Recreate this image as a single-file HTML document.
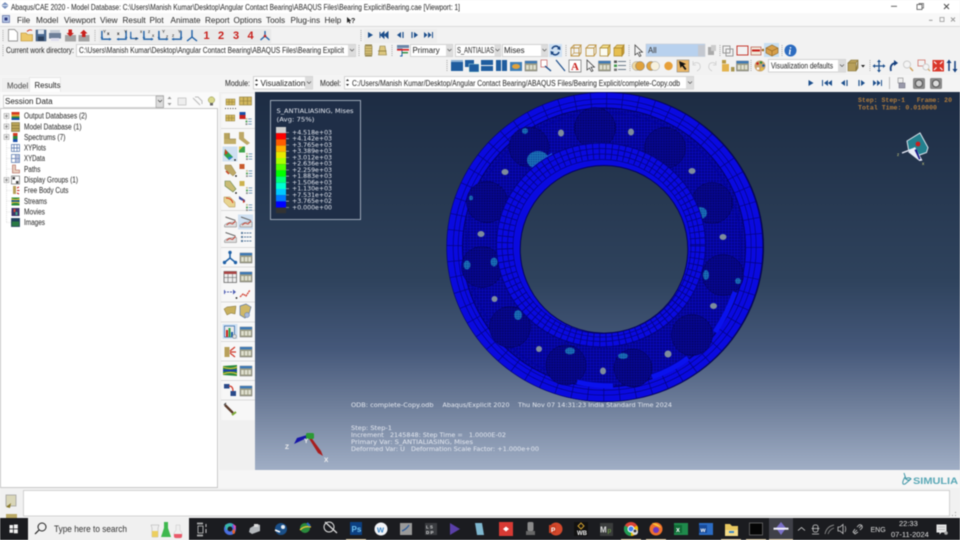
<!DOCTYPE html>
<html><head><meta charset="utf-8"><title>Abaqus/CAE</title>
<style>
html,body{margin:0;padding:0;width:960px;height:540px;overflow:hidden;background:#f4f4f4}
svg{display:block;position:absolute;left:0;top:0;filter:blur(.5px)}
text{font-family:"Liberation Sans",sans-serif;font-size:8px;fill:#222;white-space:pre}
.m{font-size:8.2px;fill:#2a2a2a}
.d{font-family:"DejaVu Sans",sans-serif;font-size:6.4px;fill:#e4e8f0}
.o{font-family:"Liberation Mono",monospace;font-size:6.5px;font-weight:bold;fill:#b17c3c}
.r{font-size:11px;font-weight:bold;fill:#c8201c}
.combo{fill:#fff;stroke:#c4c4c4;stroke-width:.7}
</style></head><body>
<svg width="960" height="540" viewBox="0 0 960 540" xmlns="http://www.w3.org/2000/svg">
<defs>
<linearGradient id="bg" gradientUnits="userSpaceOnUse" x1="0" y1="92" x2="0" y2="470">
<stop offset="0" stop-color="#1d2c43"/><stop offset=".5" stop-color="#2f435d"/><stop offset=".68" stop-color="#45587a"/><stop offset=".82" stop-color="#6c7c98"/><stop offset="1" stop-color="#a0aec5"/></linearGradient>
<pattern id="st" width="3" height="3" patternUnits="userSpaceOnUse"><rect width="3" height="3" fill="#0606a8"/><circle cx="1" cy="1" r=".7" fill="#03036a"/><circle cx="2.5" cy="2.4" r=".4" fill="#1010cc"/></pattern>
<pattern id="bl" width="2.6" height="2.6" patternUnits="userSpaceOnUse"><rect width="2.6" height="2.6" fill="#06068a"/><circle cx="1" cy="1" r=".6" fill="#03034e"/><circle cx="2.2" cy="2.1" r=".35" fill="#0e0eb8"/></pattern>
<pattern id="cy" width="2.4" height="2.4" patternUnits="userSpaceOnUse"><rect width="2.4" height="2.4" fill="#1a70b8"/><circle cx="1" cy="1" r=".7" fill="#0a3a90"/></pattern>
<symbol id="win" viewBox="0 0 12 12" overflow="visible"><rect x="0" y="1" width="12" height="10" fill="#9c9c84" stroke="#777" stroke-width=".5"/><rect x="0" y="1" width="12" height="2.4" fill="#3e78b4"/><rect x="1.2" y="5" width="2.6" height="4.5" fill="#e0e0d0"/><rect x="4.8" y="5" width="2.6" height="4.5" fill="#e0e0d0"/><rect x="8.3" y="5" width="2.6" height="4.5" fill="#e0e0d0"/></symbol>
<symbol id="lst" viewBox="0 0 12 12" overflow="visible"><rect x="1" y="0" width="3" height="3" fill="#c8c090"/><rect x="1" y="4.5" width="3" height="3" fill="#3f9a4a"/><rect x="1" y="9" width="3" height="3" fill="#888"/><path d="M5.5 1.5h6M5.5 6h6M5.5 10.5h6" stroke="#4d7fa8" stroke-width="1.2"/></symbol>
<symbol id="tan" viewBox="0 0 12 12" overflow="visible"><rect x="0" y="1" width="5.5" height="11" fill="#b6a25c"/><rect x="0" y="7" width="12" height="5" fill="#c2ae68"/><path d="M5.5 7V1M5.5 7H12" stroke="#7d6d38" stroke-width=".5"/></symbol>
<symbol id="grid" viewBox="0 0 12 12" overflow="visible"><rect x="0" y="0" width="12" height="8" fill="#d1b75e" stroke="#8c7a38" stroke-width=".6"/><path d="M4 0v8M8 0v8M0 4h12" stroke="#8c7a38" stroke-width=".6"/></symbol>
<symbol id="pl" viewBox="0 0 12 12" overflow="visible"><path d="M1 1l10 3.5" stroke="#666" stroke-width="1"/><path d="M0 9c3-3 8-3 12-3v5H0z" fill="#ddd" stroke="#777" stroke-width=".5"/><path d="M2 9l3-2 3 1 3-3" stroke="#c23a2c" fill="none" stroke-width=".9"/></symbol>
<symbol id="tri" viewBox="0 0 12 12" overflow="visible"><path d="M1 1v9h10" fill="none" stroke="#1d5fa6" stroke-width="1.5"/><path d="M1 10l-1.6-2.2h3.2zM11 10l-2.2-1.6v3.2z" fill="#1d5fa6"/></symbol>
</defs>

<!-- chrome base -->
<rect width="960" height="540" fill="#f4f4f4"/>
<rect width="960" height="13" fill="#fff"/>
<rect y="13" width="960" height="14" fill="#f8f8f8"/>
<rect y="26" width="960" height=".8" fill="#d4d4d4"/>
<rect y="27" width="960" height="48" fill="#f2f2f2"/>
<rect y="75" width="960" height="17" fill="#f4f4f4"/>

<!-- title bar -->
<path d="M5 2.5l3.5 3-3.5 3-3.5-3z" fill="#7f97c4" stroke="#44609a" stroke-width=".5"/><path d="M1.5 5.5h7" stroke="#fff" stroke-width=".7"/>
<text x="11" y="10" textLength="449" lengthAdjust="spacingAndGlyphs" style="font-size:8.4px">Abaqus/CAE 2020 - Model Database: C:\Users\Manish Kumar\Desktop\Angular Contact Bearing\ABAQUS Files\Bearing Explicit\Bearing.cae [Viewport: 1]</text>
<path d="M891 6.3h6" stroke="#555" stroke-width=".9"/>
<rect x="917" y="4.5" width="5" height="5" fill="none" stroke="#555" stroke-width=".8"/><path d="M919 4.5v-1h4.5v4.5h-1.5" fill="none" stroke="#555" stroke-width=".7"/>
<path d="M944 4l5 5M949 4l-5 5" stroke="#444" stroke-width=".9"/>
<path d="M929 20.3h3.5" stroke="#999" stroke-width="1"/>
<rect x="940" y="17.5" width="4" height="4" fill="none" stroke="#999" stroke-width=".8"/>
<path d="M951 17.5l4 4M955 17.5l-4 4" stroke="#999" stroke-width="1"/>

<!-- menu -->
<rect x="2.500" y="15.500" width="7" height="7" fill="#b7c8e8" stroke="#5a6aa0" stroke-width=".7"/><rect x="4.500" y="17.500" width="3" height="3" fill="#2f3a80"/>
<text class="m" x="17" y="23">File</text>
<text class="m" x="36" y="23">Model</text>
<text class="m" x="64" y="23">Viewport</text>
<text class="m" x="100" y="23">View</text>
<text class="m" x="122.500" y="23">Result</text>
<text class="m" x="149.500" y="23">Plot</text>
<text class="m" x="170.500" y="23">Animate</text>
<text class="m" x="205" y="23">Report</text>
<text class="m" x="233.500" y="23">Options</text>
<text class="m" x="266" y="23">Tools</text>
<text class="m" x="290.500" y="23">Plug-ins</text>
<text class="m" x="324.500" y="23">Help</text>
<path d="M347 17v6l1.500-1.500 1 2 1-.5-1-2h2z" fill="#222"/><text x="351" y="23" style="font-size:7px;font-weight:bold">?</text>

<!-- toolbar row 1 -->
<rect x="2" y="29" width="270" height="14" fill="#f0f0f0"/>
<path d="M3 30v11" stroke="#aaa" stroke-width="1" stroke-dasharray="1 1"/>
<path d="M8.500 29.500h6l3 3v8.500h-9z" fill="#fff" stroke="#777" stroke-width=".7"/>
<path d="M21 33h5l1.500 1.500h5v6.500h-11.500z" fill="#ecc769" stroke="#b58a2c" stroke-width=".6"/><path d="M27 31.500c2-2 4-2 5-1" stroke="#d43a22" fill="none" stroke-width="1"/>
<rect x="36" y="30" width="10" height="11" fill="#4b6a92" stroke="#324c6e" stroke-width=".5"/><rect x="38" y="30" width="6" height="4" fill="#dfe6ef"/><rect x="38" y="36.500" width="6" height="4.500" fill="#2a3e5c"/>
<rect x="50" y="30" width="10" height="3.500" fill="#c6cdd6"/><rect x="49" y="33" width="12" height="5.500" fill="#6d7f99"/><rect x="51" y="38" width="8" height="3" fill="#dde"/>
<rect x="65" y="35" width="11" height="6.500" fill="#a3a3a3"/><path d="M68.500 29.500h3.500v3.500h2l-3.800 3.500-3.700-3.500h2z" fill="#c9201c"/>
<rect x="78.500" y="35" width="11" height="6.500" fill="#a3a3a3"/><path d="M82 37h3.500v-3.500h2l-3.800-3.800-3.700 3.800h2z" fill="#c9201c"/>
<path d="M95 30v11" stroke="#aaa" stroke-dasharray="1 1"/>
<rect x="99" y="29" width="172" height="14" fill="#e9e9e9"/>
<use href="#tri" x="101" y="30" width="11" height="11"/><use href="#tri" transform="translate(127,30) scale(-1,1)" width="11" height="11"/>
<use href="#tri" x="130" y="30" width="9" height="11"/><use href="#tri" x="143" y="30" width="11" height="11"/>
<use href="#tri" x="158" y="30" width="11" height="11"/><use href="#tri" transform="translate(182,30) scale(-1,1)" width="11" height="11"/>
<text x="107" y="35" style="font-size:4.500px;font-weight:bold;fill:#111">x</text><text x="103" y="33" style="font-size:4.500px;fill:#111">Y</text>
<text x="117" y="35" style="font-size:4.500px;font-weight:bold;fill:#111">x</text><text x="124" y="33" style="font-size:4.500px;fill:#111">Y</text>
<text x="135" y="40" style="font-size:4.500px;fill:#111">z</text><text x="140" y="33" style="font-size:4.500px;fill:#111">x</text>
<text x="148" y="33" style="font-size:4.500px;fill:#111">z</text><text x="152" y="37" style="font-size:4.500px;fill:#111">x</text>
<text x="162" y="33" style="font-size:4.500px;fill:#111">Y</text><text x="166" y="38" style="font-size:4.500px;fill:#111">z</text>
<text x="172" y="37" style="font-size:4.500px;fill:#111">z</text><text x="178" y="33" style="font-size:4.500px;fill:#111">Y</text>
<path d="M192 30v7M192 37l-5 4M192 37l5 4" stroke="#1d5fa6" stroke-width="1.400" fill="none"/>
<text class="r" x="203.500" y="39">1</text><text class="r" x="218" y="39">2</text><text class="r" x="233" y="39">3</text><text class="r" x="247.500" y="39">4</text>
<path d="M265 31v5M265 36l-4.500 4M265 36l4.500 4" stroke="#1d5fa6" stroke-width="1.300" fill="none"/><circle cx="265" cy="36" r="1.300" fill="#c8201c"/>
<path d="M361 30v11" stroke="#aaa" stroke-dasharray="1 1"/>
<rect x="364" y="29" width="73" height="14" fill="#ededed"/>
<path d="M368 32v6l5-3z" fill="#1d4f8c"/>
<path d="M380 32v6M388 32v6l-3.500-3zM384 32v6l-3.500-3z" stroke="#1d4f8c" stroke-width="1" fill="#1d4f8c"/>
<path d="M401 32v6l-4-3z" fill="#1d4f8c"/><path d="M403 32v6" stroke="#1d4f8c" stroke-width="1.200"/>
<path d="M412 32v6" stroke="#1d4f8c" stroke-width="1.200"/><path d="M414 32v6l4-3z" fill="#1d4f8c"/>
<path d="M424 32v6l3.500-3zM428 32v6l3.500-3z" fill="#1d4f8c"/><path d="M432.500 32v6" stroke="#1d4f8c" stroke-width="1"/>

<!-- toolbar row 2 -->
<path d="M3 45v11" stroke="#aaa" stroke-dasharray="1 1"/>
<text x="6" y="53" textLength="68" lengthAdjust="spacingAndGlyphs" style="font-size:7.800px">Current work directory:</text>
<rect x="76.500" y="44.500" width="279" height="12" class="combo"/>
<text x="79" y="53" textLength="265" lengthAdjust="spacingAndGlyphs" style="font-size:7.900px">C:\Users\Manish Kumar\Desktop\Angular Contact Bearing\ABAQUS Files\Bearing Explicit</text>
<rect x="348" y="45" width="7.500" height="11" fill="#dcdcdc"/><path d="M350 49l2 2 2-2" stroke="#555" fill="none" stroke-width=".7"/>
<path d="M359 45v11" stroke="#aaa" stroke-dasharray="1 1"/>
<path d="M365 45h7M365 56h7" stroke="#8a7a3c"/><rect x="365" y="46" width="7" height="9" fill="#d7c178" stroke="#8a7a3c" stroke-width=".6"/><path d="M365 48.500h7M365 51h7M365 53.500h7" stroke="#8a7a3c" stroke-width=".6"/>
<path d="M380 46h5l1.500 9h-8z" fill="#dcc67e" stroke="#8a7a3c" stroke-width=".6"/><path d="M378 51h8.500" stroke="#8a7a3c" stroke-width=".8"/>
<path d="M392 45v11" stroke="#aaa" stroke-dasharray="1 1"/>
<path d="M397 49h5v7h-2" stroke="#1d5fa6" fill="none"/><rect x="397" y="45" width="12" height="3" fill="#6a86a8"/><rect x="397" y="49" width="12" height="1.600" fill="#d22"/><rect x="402" y="52" width="6" height="1.400" fill="#2a8a3c"/>
<rect x="410.500" y="44.500" width="42" height="12" class="combo"/><text x="412.500" y="53" style="font-size:7.900px">Primary</text>
<rect x="446" y="45" width="6.500" height="11" fill="#dcdcdc"/><path d="M447.500 49l2 2 2-2" stroke="#555" fill="none" stroke-width=".7"/>
<rect x="455.500" y="44.500" width="45" height="12" class="combo"/><text x="457" y="53" textLength="37" lengthAdjust="spacingAndGlyphs" style="font-size:7.800px">S_ANTIALIAS</text>
<rect x="494.500" y="45" width="6" height="11" fill="#dcdcdc"/><path d="M495.500 49l2 2 2-2" stroke="#555" fill="none" stroke-width=".7"/>
<rect x="502.500" y="44.500" width="45" height="12" class="combo"/><text x="504" y="53" style="font-size:7.900px">Mises</text>
<rect x="541" y="45" width="6.500" height="11" fill="#dcdcdc"/><path d="M542.500 49l2 2 2-2" stroke="#555" fill="none" stroke-width=".7"/>
<rect x="549" y="44" width="13" height="13" fill="#cfe1f3"/>
<path d="M552 49c1-3 5-4 7-1M559 52c-1 3-5 4-7 1" fill="none" stroke="#16407e" stroke-width="1.500"/><path d="M560 46l.5 4-3.500-1zM551 55l-.5-4 3.500 1z" fill="#16407e"/>
<path d="M566 45v11" stroke="#aaa" stroke-dasharray="1 1"/>
<path d="M571 48h8l2-3h-7zM571 48v8h8v-8M579 56l2-3v-8" fill="none" stroke="#bd9547" stroke-width=".9"/><path d="M574 45v8h7M574 53l-3 3" fill="none" stroke="#bd9547" stroke-width=".7"/>
<path d="M586 48h8l2-3h-7zM586 48v8h8v-8M594 56l2-3v-8" fill="#f6f6f0" stroke="#bd9547" stroke-width=".9"/>
<path d="M600 48h8l2-3h-7z" fill="#f3dd8a" stroke="#a9862f" stroke-width=".7"/><path d="M600 48v8h8v-8z" fill="#fbfbf1" stroke="#a9862f" stroke-width=".7"/><path d="M608 48l2-3v8l-2 3z" fill="#f0d26e" stroke="#a9862f" stroke-width=".7"/>
<path d="M614 48h8l2-3h-7z" fill="#e9c968" stroke="#a9862f" stroke-width=".7"/><path d="M614 48v8h8v-8z" fill="#e7bf50" stroke="#a9862f" stroke-width=".7"/><path d="M622 48l2-3v8l-2 3z" fill="#c89b33" stroke="#a9862f" stroke-width=".7"/>
<path d="M629 45v11" stroke="#aaa" stroke-dasharray="1 1"/>
<path d="M635 45v10l2.500-2 2 3.500 1.500-.8-2-3.500h3.500z" fill="#f4f4f4" stroke="#333" stroke-width=".7"/>
<rect x="646" y="44" width="59" height="12.500" fill="#b8d1ee" stroke="#c4c8d0" stroke-width=".5"/>
<text x="648" y="53" style="font-size:7.800px;fill:#333">All</text>
<rect x="698" y="45" width="7" height="11" fill="#c4c8d0"/>
<rect x="708" y="47" width="6" height="8" fill="#aaa"/><rect x="711" y="45" width="5" height="6" fill="#ccc"/>
<path d="M720 45v11" stroke="#aaa" stroke-dasharray="1 1"/>
<rect x="723" y="46" width="7" height="7" fill="none" stroke="#999"/><rect x="726" y="49" width="7" height="7" fill="none" stroke="#999"/>
<rect x="737" y="46" width="11" height="9" fill="none" stroke="#c43a30" stroke-width="1"/>
<rect x="751" y="47" width="10" height="8" fill="#f0e8d8" stroke="#b03a2c" stroke-width=".6"/><path d="M752 50.500h8" stroke="#c8201c" stroke-width="2"/><circle cx="763" cy="50" r="1.300" fill="#a06a22"/>
<rect x="764" y="43" width="15" height="14" fill="#c8dff2"/><path d="M766 48l6-3 6 3v5l-6 3-6-3z" fill="#d6a04c" stroke="#8f6220" stroke-width=".6"/><path d="M766 48l6 3 6-3M772 51v5" stroke="#8f6220" stroke-width=".6" fill="none"/>
<path d="M782 45v11" stroke="#aaa" stroke-dasharray="1 1"/>
<circle cx="790.500" cy="50.500" r="6" fill="#2d6cc0"/><text x="788.500" y="54.500" style="font-size:10px;font-weight:bold;font-style:italic;fill:#fff;font-family:'Liberation Serif',serif">i</text>

<!-- toolbar row 3 -->
<path d="M447 60v12" stroke="#aaa" stroke-dasharray="1 1"/>
<rect x="451" y="60" width="12" height="11" fill="#1f5d9f"/><rect x="451" y="60" width="12" height="2" fill="#8db2d4"/>
<rect x="465" y="60" width="9" height="7" fill="#1f5d9f"/><rect x="469" y="64" width="10" height="8" fill="#1f5d9f" stroke="#cfe" stroke-width=".4"/>
<rect x="481" y="60" width="12" height="5" fill="#1f5d9f"/><rect x="481" y="66" width="12" height="5" fill="#1f5d9f"/>
<rect x="496" y="60" width="5" height="11" fill="#1f5d9f"/><rect x="502" y="60" width="5" height="11" fill="#1f5d9f"/>
<rect x="510" y="62" width="12" height="9" fill="#3f7fb8"/><ellipse cx="516" cy="66.500" rx="4" ry="2.500" fill="#e0a23c"/>
<use href="#win" x="525" y="60" width="12" height="12"/>
<rect x="541" y="60" width="6" height="7" fill="#fff" stroke="#b44" stroke-width=".6"/><path d="M545 66l6 5" stroke="#1d4f8c" stroke-width="1.400"/>
<path d="M556 60l9 11" stroke="#1d4f8c" stroke-width="1.200"/>
<rect x="569" y="60" width="12" height="12" fill="#fff" stroke="#555" stroke-width=".6"/><text x="571" y="70" style="font-size:11px;font-weight:bold;fill:#c8201c;font-family:'Liberation Serif',serif">A</text>
<path d="M587 60v10l2.500-2 2 3.500 1.500-.8-2-3.500h3.500z" fill="#f4f4f4" stroke="#333" stroke-width=".7"/>
<use href="#win" x="598.500" y="60" width="12" height="12"/>
<rect x="614" y="60.500" width="3" height="2.500" fill="#555"/><rect x="614" y="64.500" width="3" height="2.500" fill="#3f9a4a"/><rect x="614" y="68.500" width="3" height="2.500" fill="#777"/><path d="M618 61.500h8M618 65.500h8M618 69.500h8" stroke="#6a7a8a"/>
<path d="M630 60v12" stroke="#aaa" stroke-dasharray="1 1"/>
<circle cx="636.500" cy="66" r="4.500" fill="#f0d9a0" stroke="#999" stroke-width=".5"/><circle cx="640" cy="66" r="4.500" fill="#e0a23c" stroke="#777" stroke-width=".5"/>
<circle cx="651" cy="66" r="4.500" fill="#e0a23c" stroke="#777" stroke-width=".5"/><circle cx="655" cy="66" r="4.500" fill="#f7f1de" stroke="#999" stroke-width=".5"/>
<circle cx="668.500" cy="66" r="4.200" fill="#e7a03a"/>
<rect x="677" y="60" width="12" height="12" fill="#e8b565" stroke="#777" stroke-width=".5"/><path d="M679 61l7 3-2.500 1 3 4-1.500 1-3-4-1.500 2z" fill="#111"/>
<path d="M693 64c2-2 6-2 7 1s-1 5-3 6" fill="none" stroke="#ccc" stroke-width=".8"/><path d="M693 61v4h3" fill="none" stroke="#ccc" stroke-width=".7"/>
<path d="M716 64c-2-2-6-2-7 1s1 5 3 6" fill="none" stroke="#ccc" stroke-width=".8"/><path d="M716 61v4h-3" fill="none" stroke="#ccc" stroke-width=".7"/>
<rect x="722" y="60" width="4" height="3.500" fill="#b89a44"/><rect x="722" y="64" width="7" height="7.500" fill="#e3b34c"/><rect x="731" y="67" width="3.500" height="4.500" fill="#a89550"/>
<use href="#win" x="736.500" y="60" width="12" height="12"/>
<path d="M751 60v12" stroke="#aaa" stroke-dasharray="1 1"/>
<circle cx="760" cy="66" r="5.500" fill="#caa26a"/><circle cx="757.500" cy="63.500" r="1.300" fill="#c8201c"/><circle cx="761" cy="62.500" r="1.300" fill="#2e8b3c"/><circle cx="763.500" cy="65.500" r="1.300" fill="#1d5fa6"/><circle cx="762" cy="69" r="1.300" fill="#e8c23a"/><circle cx="758" cy="68.500" r="1.300" fill="#fff"/>
<rect x="768.500" y="59.500" width="77" height="12.500" class="combo"/><text x="771" y="68.500" textLength="62" lengthAdjust="spacingAndGlyphs" style="font-size:7.800px">Visualization defaults</text>
<rect x="838" y="60" width="7.500" height="12" fill="#dcdcdc"/><path d="M840 64.500l2 2 2-2" stroke="#555" fill="none" stroke-width=".7"/>
<path d="M848 63h8l2-3h-7zM848 63v8h8v-8zM856 71l2-3v-8z" fill="#b8a05a" stroke="#7e6c32" stroke-width=".6"/>
<path d="M861 65h4l-2 2.500z" fill="#222"/>
<path d="M870 60v12" stroke="#aaa" stroke-dasharray="1 1"/>
<path d="M879 60.500v11M873.500 66h11" stroke="#1d4f8c" stroke-width="1.200"/><path d="M879 59.500l-2 2.500h4zM879 72.500l-2-2.500h4zM872.500 66l2.500-2v4zM885.500 66l-2.500-2v4z" fill="#1d4f8c"/>
<path d="M891 71c-1-4 0-7 4-8" fill="none" stroke="#16407e" stroke-width="1.800"/><path d="M898 63l-4-3v6z" fill="#16407e"/>
<circle cx="907" cy="64.500" r="3.500" fill="#f4f4f4" stroke="#ccc"/><path d="M910 67.500l3 3.500" stroke="#cfa460" stroke-width="1.500"/>
<rect x="918" y="60" width="7" height="6" fill="none" stroke="#d0736a" stroke-width=".8"/><circle cx="926" cy="67" r="3" fill="#f4f4f4" stroke="#ccc"/><path d="M928 69l2 2" stroke="#cfa460" stroke-width="1.200"/>
<rect x="932.500" y="60" width="11.500" height="11.500" fill="#d9372a"/><path d="M934 61.500l2.500 2.500M942.500 61.500l-2.500 2.500M934 70l2.500-2.500M942.500 70l-2.500-2.500" stroke="#fff" stroke-width="1.100"/>
<path d="M949 61v10M955 61v10" stroke="#16407e" stroke-width="1.500"/><path d="M949 59.500l-2.500 3.500h5zM955 72.500l-2.500-3.500h5z" fill="#16407e"/>

<!-- module row -->
<text x="225" y="86" textLength="25" lengthAdjust="spacingAndGlyphs" style="font-size:8px">Module:</text>
<rect x="253.500" y="76.500" width="59" height="12.500" class="combo"/><path d="M255 81l1.500-2 1.500 2zM255 84l1.500 2 1.500-2z" fill="#222"/><text x="260.500" y="86" style="font-size:8px">Visualization</text>
<rect x="305" y="77" width="7.500" height="12" fill="#dcdcdc"/><path d="M307 81.500l2 2 2-2" stroke="#555" fill="none" stroke-width=".7"/>
<text x="320" y="86" textLength="21" lengthAdjust="spacingAndGlyphs" style="font-size:8px">Model:</text>
<rect x="344.500" y="76.500" width="349" height="12.500" class="combo"/><path d="M346 81l1.500-2 1.500 2zM346 84l1.500 2 1.500-2z" fill="#222"/>
<text x="352" y="86" textLength="328" lengthAdjust="spacingAndGlyphs" style="font-size:8px">C:/Users/Manish Kumar/Desktop/Angular Contact Bearing/ABAQUS Files/Bearing Explicit/complete-Copy.odb</text>
<rect x="686" y="77" width="7.500" height="12" fill="#dcdcdc"/><path d="M688 81.500l2 2 2-2" stroke="#555" fill="none" stroke-width=".7"/>
<path d="M808.500 80v6l5-3z" fill="#1d4f8c"/>
<path d="M822.500 80v6" stroke="#1d4f8c" stroke-width="1"/><path d="M828 80v6l-4-3zM832 80v6l-4-3z" fill="#1d4f8c"/>
<path d="M845 80v6l-4-3z" fill="#1d4f8c"/><path d="M847 80v6" stroke="#1d4f8c" stroke-width="1.200"/>
<path d="M859 80v6" stroke="#1d4f8c" stroke-width="1.200"/><path d="M861 80v6l4-3z" fill="#1d4f8c"/>
<path d="M873 80v6l3.500-3zM877 80v6l3.500-3z" fill="#1d4f8c"/><path d="M881.500 80v6" stroke="#1d4f8c" stroke-width="1"/>
<path d="M889.500 77v12" stroke="#bbb"/>
<rect x="898" y="78" width="5" height="5" fill="#eee" stroke="#888" stroke-width=".6"/><rect x="899" y="83" width="6" height="5" fill="#99a" stroke="#667" stroke-width=".5"/>
<rect x="913" y="78" width="12" height="11" rx="1.500" fill="#8a8a8a"/><circle cx="919" cy="83.500" r="3.500" fill="#ccc" stroke="#555"/>
<rect x="930" y="78" width="12" height="11" rx="1.500" fill="#8a8a8a"/><circle cx="936" cy="83.500" r="3.500" fill="#ddd" stroke="#555"/>

<!-- left panel -->
<rect x="2" y="78" width="27" height="14" fill="#f0f0f0"/><rect x="29.500" y="77.500" width="31" height="15" fill="#fdfdfd" stroke="#e0e0e0" stroke-width=".7"/>
<text x="7" y="88.500" style="font-size:7.800px;fill:#444">Model</text><text x="34.500" y="88" style="font-size:7.800px">Results</text>
<rect x="0" y="92" width="219" height="397" fill="#fafafa"/>
<rect x="3.500" y="95.500" width="160" height="12" class="combo"/>
<text x="5" y="104" style="font-size:8px">Session Data</text>
<rect x="156" y="96" width="7.500" height="11.500" fill="#dcdcdc" stroke="#888" stroke-width=".5"/><path d="M158 100l2 2 2-2" stroke="#444" fill="none" stroke-width=".7"/>
<path d="M167.500 99l2-2.500 2 2.500zM167.500 103l2 2.500 2-2.500z" fill="#999"/>
<rect x="178" y="98" width="8" height="7" fill="#eee" stroke="#bbb" stroke-width=".7"/><path d="M193 98l7 7M195 97h3l4 4v3" stroke="#bbb" fill="none"/>
<circle cx="211.500" cy="100" r="3.200" fill="#d8d88c" stroke="#8a8a44" stroke-width=".5"/><rect x="210" y="103" width="3" height="2.500" fill="#666"/>
<rect x=".5" y="108.500" width="217" height="379" fill="#fff" stroke="#bcbcbc" stroke-width=".8"/>
<path d="M6.500 113v109.500" stroke="#ccc" stroke-width=".6" stroke-dasharray="1 1"/>
<g stroke="#ccc" stroke-width=".6" stroke-dasharray="1 1"><path d="M6.500 158.500h5M6.500 169h5M6.500 190.500h5M6.500 201h5M6.500 212h5M6.500 222.500h5M6.500 148h5"/></g>
<g fill="#eee" stroke="#999" stroke-width=".5"><rect x="4" y="113.500" width="5" height="5"/><rect x="4" y="124" width="5" height="5"/><rect x="4" y="134.500" width="5" height="5"/><rect x="4" y="177.500" width="5" height="5"/></g>
<g stroke="#555" stroke-width=".6"><path d="M5 116h3M6.500 114.500v3M5 126.500h3M6.500 125v3M5 137h3M6.500 135.500v3M5 180h3M6.500 178.500v3"/></g>
<rect x="11.500" y="112" width="8" height="8" fill="#2a8a3c"/><rect x="11.500" y="112" width="8" height="2.700" fill="#d43a22"/><rect x="11.500" y="114.500" width="8" height="2" fill="#e7a03a"/><rect x="11.500" y="118" width="8" height="2" fill="#1a4fa8"/>
<rect x="11.500" y="122.500" width="8" height="9" fill="#bca65a" stroke="#665a2a" stroke-width=".5"/><path d="M11.500 125.500h8M11.500 128.500h8" stroke="#665a2a" stroke-width=".5"/>
<rect x="13" y="133" width="4.500" height="9" fill="#2a8a3c"/><rect x="13" y="133" width="4.500" height="3" fill="#d43a22"/><rect x="13" y="139" width="4.500" height="3" fill="#1a4fa8"/>
<g fill="none" stroke="#4d6fa8" stroke-width=".7"><rect x="11.500" y="144.500" width="8" height="7"/><path d="M14 144.500v7M17 144.500v7M11.500 148h8"/><rect x="11.500" y="154.500" width="8" height="8"/><path d="M15.500 154.500v8M11.500 158.500h8"/></g>
<rect x="15" y="155" width="4" height="7" fill="#8d9bc5" opacity=".6"/>
<path d="M12.500 165v8h7v-3h-4v-5z" fill="#e9d0c0" stroke="#a8554a" stroke-width=".6"/>
<rect x="11.500" y="176" width="8" height="8" fill="#fff" stroke="#555" stroke-width=".6"/><rect x="12.500" y="177" width="2.500" height="2.500" fill="#444"/><rect x="16" y="181" width="2.500" height="2.500" fill="#444"/>
<rect x="13" y="186" width="3" height="8" fill="#b8a05a"/><path d="M17 188l2-1M17 190.500h2.500M17 193l2 1" stroke="#c8201c" stroke-width="1"/>
<path d="M11.500 197.500h8v8h-8z" fill="#2a8a3c"/><path d="M11.500 199c3 1 5 1 8 0M11.500 203c3-1 5-1 8 0" stroke="#e0c040" fill="none" stroke-width="1.200"/><path d="M11.500 201h8" stroke="#1a4fa8" stroke-width="1.300"/>
<rect x="11.500" y="208" width="8" height="8" fill="#3d3468"/><rect x="13.500" y="209" width="2" height="3" fill="#c43"/><rect x="15.500" y="212" width="2" height="3" fill="#4a8"/>
<rect x="11.500" y="218.500" width="8" height="8" fill="#2a7a44" stroke="#1e3e5a" stroke-width=".8"/><rect x="11.500" y="218.500" width="8" height="3" fill="#1e3e5a"/>
<g style="fill:#333">
<text x="24" y="118.500" textLength="63" lengthAdjust="spacingAndGlyphs">Output Databases (2)</text>
<text x="24" y="129.500" textLength="57.500" lengthAdjust="spacingAndGlyphs">Model Database (1)</text>
<text x="24" y="140" textLength="41.500" lengthAdjust="spacingAndGlyphs">Spectrums (7)</text>
<text x="24" y="150.500" textLength="22" lengthAdjust="spacingAndGlyphs">XYPlots</text>
<text x="24" y="161" textLength="21" lengthAdjust="spacingAndGlyphs">XYData</text>
<text x="24" y="172" textLength="16.500" lengthAdjust="spacingAndGlyphs">Paths</text>
<text x="24" y="182.500" textLength="54" lengthAdjust="spacingAndGlyphs">Display Groups (1)</text>
<text x="24" y="193" textLength="44.500" lengthAdjust="spacingAndGlyphs">Free Body Cuts</text>
<text x="24" y="204" textLength="23" lengthAdjust="spacingAndGlyphs">Streams</text>
<text x="24" y="214.500" textLength="21" lengthAdjust="spacingAndGlyphs">Movies</text>
<text x="24" y="225" textLength="21" lengthAdjust="spacingAndGlyphs">Images</text>
</g>

<!-- toolbox -->
<rect x="219" y="92" width="36" height="396" fill="#f0f0f0"/>
<rect x="221.500" y="94" width="33.500" height="326" fill="#f7f7f7"/>
<g stroke="#d4d4d4" stroke-width=".8"><path d="M221 128.500h34M221 210.500h34M221 247.500h34M221 267h34M221 302h34M221 322h34M221 341.500h34M221 361h34M221 380.500h34M221 400h34"/></g>
<rect x="222.500" y="146.500" width="15" height="15" fill="#cfe0f2"/><rect x="238" y="214.500" width="15" height="15" fill="#cfe0f2"/><rect x="222.500" y="324" width="15" height="15" fill="#cfe0f2"/>
<use href="#grid" x="224" y="99" width="13" height="9"/><path d="M225 108.500h11" stroke="#444" stroke-dasharray="1 1.500"/>
<use href="#grid" x="239" y="97" width="13" height="12"/>
<use href="#grid" x="224" y="115" width="12.500" height="9"/>
<rect x="239.500" y="112" width="6" height="7" fill="#c8201c"/><rect x="239.500" y="112" width="6" height="3" fill="#1a4fa8"/><use href="#lst" x="245" y="117" width="7" height="9"/>
<use href="#tan" x="224" y="132" width="12" height="12"/><path d="M239 132h5v6l6 5-3 2-8-6z" fill="#bda866"/>
<path d="M225 149l8 8-4 3-5-5z" fill="#2aa24a"/><path d="M225 149v6l3-2z" fill="#d43a22"/><path d="M233 157l-4 3-1-3z" fill="#2a7ad0"/><circle cx="235" cy="160" r=".9" fill="#111"/>
<rect x="239" y="146.500" width="6" height="6" fill="#3fa24a"/><path d="M239 146.500h4l-4 4z" fill="#e0c040"/><use href="#lst" x="245.500" y="152" width="7" height="9"/>
<path d="M225 165h6l5 8-3 3-8-7z" fill="#bda866" stroke="#7d6d38" stroke-width=".4"/><path d="M226 171l3 3" stroke="#c8401c" stroke-width="1.500"/><circle cx="236" cy="176" r=".9" fill="#111"/>
<rect x="239.500" y="164" width="5" height="5" fill="#c85a2c"/><use href="#lst" x="245.500" y="169" width="7" height="9"/>
<path d="M225 181h5l6 8-3 3-8-6z" fill="#c9bc74" stroke="#5f7f48" stroke-width=".6"/><circle cx="236" cy="193" r=".9" fill="#111"/>
<rect x="239.500" y="181" width="5" height="5" fill="#cdb24e"/><use href="#lst" x="245.500" y="186" width="7" height="9"/>
<path d="M224 197h6l5 5v5h-6l-5-5z" fill="#e8d490" stroke="#a8884a" stroke-width=".5"/><path d="M226 198c4 0 6 2 7 5" fill="none" stroke="#d43a22" stroke-width="1"/>
<path d="M239 196l6 4v2l-6-3z" fill="#3a4a9a"/><path d="M243 199l2 3-2 1z" fill="#c8301c"/><use href="#lst" x="245.500" y="203" width="7" height="9"/>
<use href="#pl" x="224" y="216" width="13" height="12"/><use href="#pl" x="239.500" y="216" width="13" height="12"/>
<use href="#pl" x="224" y="231.500" width="13" height="12"/>
<g fill="#5a7a9c"><rect x="241" y="232" width="2" height="2"/><rect x="241" y="236" width="2" height="2"/><rect x="241" y="240" width="2" height="2"/></g><path d="M244 233h8M244 237h8M244 241h8" stroke="#5a7a9c" stroke-dasharray="2 .7"/>
<path d="M230 254v4M230 258l-5 4M230 258l5 4" stroke="#1d5fa6" stroke-width="1.500" fill="none"/><circle cx="230" cy="252.500" r="1.700" fill="#1d5fa6"/><circle cx="224.500" cy="262.500" r="1.700" fill="#1d5fa6"/><circle cx="235.500" cy="262.500" r="1.700" fill="#1d5fa6"/>
<use href="#win" x="239.500" y="252" width="13" height="12"/>
<rect x="224" y="271.500" width="12.500" height="11" fill="#eee" stroke="#555" stroke-width=".7"/><rect x="224" y="271.500" width="12.500" height="2.500" fill="#a44"/><path d="M228 274v8.500M232.500 274v8.500M224 277.500h12.500" stroke="#555" stroke-width=".5"/>
<use href="#win" x="239.500" y="271" width="13" height="12"/>
<path d="M224 292h10" stroke="#4a5ab0" stroke-width="1" stroke-dasharray="2 1"/><path d="M236 292l-3-2.500v5z" fill="#4a5ab0"/><path d="M224.500 290v4" stroke="#4a5ab0"/><circle cx="236.500" cy="298" r=".9" fill="#111"/>
<path d="M240 297l3-3 3 2 4-6" fill="none" stroke="#d03a2a" stroke-width="1.200" stroke-dasharray="2 .5"/>
<path d="M224 309l3-2 9-1-1 8-4-1-4 2z" fill="#c8b05e" stroke="#7d6d38" stroke-width=".5"/>
<path d="M240 306l6-2 5 3-2 7-4 4-5-3z" fill="#d0b868" stroke="#5a76a8" stroke-width=".7"/><circle cx="247" cy="315" r="2.500" fill="#a8b8d8" stroke="#5a76a8" stroke-width=".5"/>
<rect x="224.500" y="326" width="10" height="11" fill="#e8e8e8" stroke="#1d5fa6" stroke-width=".7"/><rect x="226" y="330" width="2" height="7" fill="#c8201c"/><rect x="228.500" y="328" width="2" height="9" fill="#2aa24a"/><rect x="231" y="332" width="2" height="5" fill="#1d5fa6"/><circle cx="234.500" cy="336.500" r="2" fill="#ddd" stroke="#777" stroke-width=".5"/>
<use href="#win" x="239.500" y="326" width="13" height="12"/>
<rect x="224.500" y="347" width="5" height="10" fill="#b8a05a"/><path d="M230 351l5-4M230 352h6M230 353l5 4" stroke="#d03a2a" stroke-width="1.200"/>
<use href="#win" x="239.500" y="346" width="13" height="12"/>
<path d="M223 366l14-1v11l-14-1z" fill="#2a8a3c"/><path d="M223 367c5 2 10 2 14 0M223 374c5-2 10-2 14 0" stroke="#e0c040" stroke-width="1.200" fill="none"/><path d="M223 370.500h14" stroke="#1d3fa8" stroke-width="2"/>
<use href="#win" x="239.500" y="365" width="13" height="12"/>
<rect x="224" y="384" width="5.500" height="4.500" fill="#2a4a8a"/><rect x="230.500" y="391" width="5.500" height="5" fill="#2a4a8a"/><path d="M229 386c3 0 4 2 4 5" fill="none" stroke="#d03a2a" stroke-width="1.200"/>
<use href="#win" x="239.500" y="385" width="13" height="12"/>
<path d="M225 405l8 8" stroke="#5a3a2a" stroke-width="2.400"/><path d="M224 405l2-2" stroke="#333"/><path d="M232 415l4-3" stroke="#7aa832" stroke-width="2"/>

<!-- viewport -->
<rect x="255" y="92" width="705" height="378" fill="url(#bg)"/>

<!-- Legend -->
<rect x="270.500" y="100.500" width="90" height="119" fill="#1f2e47" stroke="#a8b3c2" stroke-width=".9"/>
<text class="d" x="276.500" y="113" textLength="77" lengthAdjust="spacingAndGlyphs">S_ANTIALIASING, Mises</text>
<text class="d" x="276.500" y="121.500" textLength="38" lengthAdjust="spacingAndGlyphs">(Avg: 75%)</text>
<rect x="276" y="127" width="10" height="6.200" fill="#cfcfcf"/><rect x="276" y="133.200" width="10" height="6.200" fill="#ff0000"/><rect x="276" y="139.400" width="10" height="6.200" fill="#ff5c00"/><rect x="276" y="145.600" width="10" height="6.200" fill="#ffb000"/><rect x="276" y="151.800" width="10" height="6.200" fill="#e8e800"/><rect x="276" y="158" width="10" height="6.200" fill="#a8ff00"/><rect x="276" y="164.200" width="10" height="6.200" fill="#50ff00"/><rect x="276" y="170.400" width="10" height="6.200" fill="#00ff00"/><rect x="276" y="176.600" width="10" height="6.200" fill="#00ff78"/><rect x="276" y="182.800" width="10" height="6.200" fill="#00ffd0"/><rect x="276" y="189" width="10" height="6.200" fill="#00c8ff"/><rect x="276" y="195.200" width="10" height="6.200" fill="#0078ff"/><rect x="276" y="201.400" width="10" height="6.200" fill="#0000ff"/><rect x="276" y="207.600" width="10" height="5.600" fill="#333"/>
<g stroke="#c8ced8" stroke-width=".6"><path d="M286 132.500h3M286 138.700h3M286 145h3M286 151.200h3M286 157.500h3M286 163.700h3M286 170h3M286 176.200h3M286 182.500h3M286 188.700h3M286 195h3M286 201.200h3M286 207.500h3"/></g>
<text class="d" x="292" y="134.500" textLength="40" lengthAdjust="spacingAndGlyphs">+4.518e+03</text>
<text class="d" x="292" y="140.700" textLength="40" lengthAdjust="spacingAndGlyphs">+4.142e+03</text>
<text class="d" x="292" y="147" textLength="40" lengthAdjust="spacingAndGlyphs">+3.765e+03</text>
<text class="d" x="292" y="153.200" textLength="40" lengthAdjust="spacingAndGlyphs">+3.389e+03</text>
<text class="d" x="292" y="159.500" textLength="40" lengthAdjust="spacingAndGlyphs">+3.012e+03</text>
<text class="d" x="292" y="165.700" textLength="40" lengthAdjust="spacingAndGlyphs">+2.636e+03</text>
<text class="d" x="292" y="172" textLength="40" lengthAdjust="spacingAndGlyphs">+2.259e+03</text>
<text class="d" x="292" y="178.200" textLength="40" lengthAdjust="spacingAndGlyphs">+1.883e+03</text>
<text class="d" x="292" y="184.500" textLength="40" lengthAdjust="spacingAndGlyphs">+1.506e+03</text>
<text class="d" x="292" y="190.700" textLength="40" lengthAdjust="spacingAndGlyphs">+1.130e+03</text>
<text class="d" x="292" y="197" textLength="40" lengthAdjust="spacingAndGlyphs">+7.531e+02</text>
<text class="d" x="292" y="203.200" textLength="40" lengthAdjust="spacingAndGlyphs">+3.765e+02</text>
<text class="d" x="292" y="209.500" textLength="40" lengthAdjust="spacingAndGlyphs">+0.000e+00</text>

<!-- step text -->
<text class="o" x="858" y="102" textLength="94" lengthAdjust="spacingAndGlyphs">Step: Step-1   Frame: 20</text>
<text class="o" x="858" y="109.500" textLength="79" lengthAdjust="spacingAndGlyphs">Total Time: 0.010000</text>

<!-- orientation -->
<path d="M907 141l13-8 8 14.500-1.500 5-10 3.500-8-6.500z" fill="#23808e" stroke="#dfe6ee" stroke-width="1"/>
<circle cx="918" cy="144" r="2.400" fill="#c81e1e"/>
<path d="M915 148l-13 5" stroke="#e8ecf8" stroke-width="1.400"/>
<path d="M908 152l7-5 7.500 13.500-3 .5z" fill="#e8ecf8"/><path d="M914.500 150l2-1 4 10-1.500.5z" fill="#1a1a88"/>
<text x="897" y="156" style="font-size:4.500px;fill:#d8d880">z</text><text x="922" y="165" style="font-size:4.500px;fill:#d8d880">x</text>

<!-- bearing -->
<g transform="translate(604.700,247) scale(1,.978)">
<circle r="158.500" cx=".8" fill="#05054a"/>
<circle r="158" fill="#0a0ae0"/>
<g fill="none" stroke="#04047c" stroke-width=".7"><circle r="158"/><circle r="151.500"/><circle r="146.500"/></g>
<circle r="148.700" fill="none" stroke="#04047c" stroke-width="19" stroke-dasharray=".8 14.800" opacity=".9"/>
</g>
<ellipse cx="604" cy="247.500" rx="141.500" ry="139.500" fill="url(#st)" stroke="#03036a" stroke-width="1"/>
<ellipse cx="604" cy="247.500" rx="137" ry="135" fill="none" stroke="#0202a0" stroke-width="1"/>

<!-- balls -->
<g fill="url(#bl)" stroke="#03034e" stroke-width=".5">
<circle cx="595" cy="128" r="20.500"/><circle cx="529" cy="147" r="20"/><circle cx="665" cy="148" r="20.500"/><circle cx="712" cy="203" r="20.500"/><circle cx="487" cy="202" r="20.500"/><circle cx="482" cy="267" r="20.500"/><circle cx="723" cy="275" r="20.500"/><circle cx="692" cy="335" r="20.500"/><circle cx="510" cy="327" r="20.500"/><circle cx="566" cy="365" r="20"/><circle cx="633" cy="368" r="19"/>
</g>
<g fill="url(#cy)">
<ellipse cx="538" cy="160" rx="11" ry="9"/><ellipse cx="700" cy="213" rx="7" ry="6"/><ellipse cx="596" cy="145" rx="4" ry="2.500"/><ellipse cx="656" cy="165" rx="4" ry="3"/><ellipse cx="525" cy="131" rx="3" ry="3"/><ellipse cx="467" cy="265" rx="3.500" ry="4.500"/><ellipse cx="494" cy="262" rx="3.500" ry="4.500"/><ellipse cx="706" cy="275" rx="3" ry="5"/><ellipse cx="738" cy="281" rx="3" ry="3"/><ellipse cx="518" cy="315" rx="4" ry="5"/><ellipse cx="570" cy="351" rx="5" ry="3.500"/><ellipse cx="623" cy="356" rx="5" ry="3"/><ellipse cx="471" cy="198" rx="2" ry="2.500"/>
</g>
<g fill="#7e8c9c">
<ellipse cx="561" cy="133" rx="3" ry="3.500"/><ellipse cx="631" cy="132" rx="3" ry="3.500"/><ellipse cx="692" cy="171" rx="3.500" ry="3"/><ellipse cx="723" cy="237" rx="3.500" ry="3"/><ellipse cx="713.500" cy="306" rx="3.500" ry="3"/><ellipse cx="668" cy="354" rx="3.500" ry="3.500"/><ellipse cx="603" cy="371" rx="3" ry="3.500"/><ellipse cx="539" cy="349" rx="3" ry="3"/><ellipse cx="494.500" cy="299" rx="3" ry="3"/><ellipse cx="481" cy="234" rx="3.500" ry="3"/><ellipse cx="505" cy="172" rx="3.500" ry="3"/>
</g>
<g fill="none" stroke="#0a12ee" stroke-width="5">
<path d="M735 292c-5 14-12 28-20 40"/><path d="M688 358c-10 8-24 15-36 19"/><path d="M577 382c12 3 25 4 36 4"/>
</g>
<path d="M533 169l20-14" fill="none" stroke="#1a50f0" stroke-width="5"/>

<!-- inner ring -->
<ellipse cx="601" cy="245" rx="104.500" ry="102" fill="#0a0ae0" stroke="#04047c" stroke-width=".9"/>
<g fill="none" stroke="#04047c" stroke-width=".7"><ellipse cx="601" cy="245" rx="99" ry="96.500"/><ellipse cx="601.500" cy="245.500" rx="94" ry="91.500"/><ellipse cx="602" cy="246.500" rx="89" ry="87"/></g>
<ellipse cx="601.500" cy="245.500" rx="96.500" ry="94.500" fill="none" stroke="#04047c" stroke-width="16" stroke-dasharray=".8 5.500"/>
<circle cx="604" cy="249.300" r="84.300" fill="#03035e"/>
<circle cx="604" cy="249.300" r="83.300" fill="url(#bg)"/>

<!-- footer text in viewport -->
<text class="d" x="351" y="407" textLength="82.500" lengthAdjust="spacingAndGlyphs">ODB: complete-Copy.odb</text>
<text class="d" x="442.500" y="407" textLength="67" lengthAdjust="spacingAndGlyphs">Abaqus/Explicit 2020</text>
<text class="d" x="518" y="407" textLength="154" lengthAdjust="spacingAndGlyphs">Thu Nov 07 14:31:23 India Standard Time 2024</text>
<text class="d" x="351" y="430" textLength="41" lengthAdjust="spacingAndGlyphs">Step: Step-1</text>
<text class="d" x="351" y="437" textLength="155" lengthAdjust="spacingAndGlyphs">Increment   2145848: Step Time =   1.0000E-02</text>
<text class="d" x="351" y="444" textLength="122" lengthAdjust="spacingAndGlyphs">Primary Var: S_ANTIALIASING, Mises</text>
<text class="d" x="351" y="451" textLength="188" lengthAdjust="spacingAndGlyphs">Deformed Var: U   Deformation Scale Factor: +1.000e+00</text>

<!-- triad -->
<path d="M311 436l-17 8 3-6 10-3z" fill="#1515a8"/>
<path d="M310 436l11 15 2 5-5-3-10-16z" fill="#a81e1e"/>
<rect x="306" y="433" width="8" height="6" rx="1.500" fill="#2c9a34"/>
<text x="285" y="449" style="font-size:6.500px;font-weight:bold;fill:#eee">Z</text><text x="304" y="443" style="font-size:6.500px;font-weight:bold;fill:#eee">Y</text><text x="324" y="462" style="font-size:6.500px;font-weight:bold;fill:#eee">X</text>

<!-- bottom strip -->
<rect x="219" y="470" width="741" height="19" fill="#f6f6f6"/>
<path d="M905 477c-3 5-3 8 0 7l6-5c-1-2-4-1-6 0M904 473l2 6c2 2 3 1 5 0" fill="none" stroke="#3f96a6" stroke-width="1"/>
<text x="913" y="484" textLength="45" lengthAdjust="spacingAndGlyphs" style="font-size:9px;font-weight:bold;fill:#5aa8b6">SIMULIA</text>
<rect y="488" width="960" height="30" fill="#f1f1f1"/>
<rect x="23.500" y="490.500" width="926" height="25.500" fill="#fff" stroke="#c8c8c8" stroke-width=".8"/>
<rect x="6" y="495" width="10" height="11" fill="#d9d6b8" stroke="#999" stroke-width=".7"/><path d="M6 507l5-4-1 5z" fill="#8a7a2c"/>
<rect x="6" y="514" width="11" height="5" fill="#b9a864"/>
<path d="M952 515h1v1h-1zM955 512h1v1h-1zM955 515h1v1h-1z" fill="#999"/>

<!-- taskbar -->
<rect y="518" width="960" height="22" fill="#1b1c20"/>
<g fill="#f2f2f2"><rect x="9.500" y="525" width="3.500" height="3.500"/><rect x="13.800" y="524.500" width="4" height="4"/><rect x="9.500" y="529.300" width="3.500" height="3.500"/><rect x="13.800" y="529.300" width="4" height="4"/></g>
<rect x="28" y="518" width="161" height="22" fill="#f0f0f0"/>
<circle cx="42" cy="527" r="4" fill="none" stroke="#222" stroke-width="1"/><path d="M39 530l-4 4" stroke="#222" stroke-width="1.200"/>
<text x="54" y="532" textLength="73" lengthAdjust="spacingAndGlyphs" style="font-size:9px;fill:#333">Type here to search</text>
<path d="M151 525h8l-1 3v9h-6v-9z" fill="#eee" stroke="#aaa" stroke-width=".5"/><rect x="152" y="531" width="6" height="6" fill="#eccf60"/>
<path d="M164 522h4v6l3 9h-10l3-9z" fill="#3fb84f"/>
<path d="M176 525h4v5l2 3v3a2 2 0 0 1-2 2h-4a2 2 0 0 1-2-2v-3l2-3z" fill="#eee" stroke="#bbb" stroke-width=".4"/><path d="M174 534h8v2a2 2 0 0 1-2 2h-4a2 2 0 0 1-2-2z" fill="#ea5a6a"/>
<path d="M197.500 524h5v-1h-5zM198 526h5v7h-5zM197.500 535h5v1h-5z" fill="none" stroke="#c8c8c8" stroke-width=".8"/><path d="M206 524v3M206 529v4" stroke="#c8c8c8"/>
<circle cx="230" cy="529" r="6" fill="#4a6ee0"/><path d="M225 525c3-2 6-2 8-1l-3 5-4 1z" fill="#38b8a8"/><path d="M232 531c1 3 1 4 3 2v-5z" fill="#e8622c"/><circle cx="230" cy="529" r="2.500" fill="#1a1c20"/><path d="M233 524l3 2-1 5z" fill="#e84ab0"/>
<path d="M250 528l7-4 3 1v6l-8 3-3-2z" fill="#b4b8bc"/><rect x="254" y="524" width="4" height="3" fill="#ddd"/>
<circle cx="281" cy="529" r="6" fill="#1a4f88"/><circle cx="283" cy="527" r="2" fill="#e8eef4"/><path d="M275 530l5 2" stroke="#fff" stroke-width="1.500"/>
<circle cx="305" cy="528" r="5" fill="#2a8a3c"/><path d="M300 530c3-3 7-4 11-3" stroke="#e8c23a" stroke-width="1.400" fill="none"/><path d="M307 523l3 3" stroke="#2a6ac0" stroke-width="2"/>
<circle cx="329" cy="527" r="5" fill="none" stroke="#ddd" stroke-width="1"/><path d="M325 522l12 11" stroke="#ddd" stroke-width="1.200"/>
<rect x="350" y="522" width="12" height="13" fill="#0c3f80"/><text x="351.500" y="532" style="font-size:8px;font-weight:bold;fill:#6cc0f0">Ps</text>
<rect x="346" y="539" width="20" height="1" fill="#d8c49c"/>
<circle cx="381" cy="529" r="6.500" fill="#f2f4f8"/><text x="377" y="532.500" style="font-size:9px;font-weight:bold;fill:#3f88c8">w</text>
<rect x="400" y="523" width="12" height="12" fill="#9a9a9a"/><path d="M402 531c3-1 6-4 7-6" stroke="#2a5a9a" stroke-width="1.200" fill="none"/>
<rect x="425" y="523" width="12" height="12" fill="#3a3c40"/><text x="426" y="528.500" style="font-size:4.500px;font-weight:bold;fill:#ddd">L S</text><text x="426" y="534" style="font-size:4.500px;font-weight:bold;fill:#ddd">D P</text>
<path d="M450 523l10 6-10 6z" fill="#5a3fa8"/>
<path d="M475 523h7l2 12h-7z" fill="#7fb8d0"/>
<rect x="499" y="522" width="14" height="14" fill="#d83a34"/><path d="M503 529l3-2.500v5zM509 529l-3-2.500v5z" fill="#fff"/>
<rect x="527.500" y="522" width="6" height="9" rx="1.500" fill="#8a8a8a"/><rect x="526" y="531" width="9" height="4" fill="#666"/>
<circle cx="556" cy="529" r="6.500" fill="#d3482c"/><rect x="549" y="525" width="7" height="8" fill="#c43e22"/><text x="551" y="532" style="font-size:6.500px;font-weight:bold;fill:#fff">P</text>
<rect x="574" y="522" width="14" height="14" fill="#111"/><path d="M581 523l3 3-3 3-3-3z" fill="none" stroke="#d0a030"/><text x="577" y="535" style="font-size:6px;font-weight:bold;fill:#eee">WB</text>
<rect x="600" y="523" width="13" height="13" fill="#3a3c3c"/><text x="600" y="532.500" style="font-size:8px;font-weight:bold;fill:#ddd">M</text><text x="607.500" y="532.500" style="font-size:6.500px;fill:#7ab048">p</text>
<circle cx="631" cy="529" r="7" fill="#dc4437"/><path d="M631 529l6.100-3.500A7 7 0 0 1 631 536z" fill="#f2c20c"/><path d="M631 529v7A7 7 0 0 1 624.900 525.500z" fill="#1f9d55"/><circle cx="631" cy="529" r="3" fill="#4285f4" stroke="#fff"/>
<circle cx="635" cy="532" r="3" fill="#ddd"/><circle cx="635" cy="531" r="1.400" fill="#333"/>
<rect x="621" y="539" width="20" height="1" fill="#d8c49c"/>
<circle cx="656" cy="529" r="6.500" fill="#f0702c"/><circle cx="656" cy="530" r="3" fill="#7038c0"/><path d="M652 523c4 0 8 2 9 5-3-2-6-2-9-5z" fill="#f8c838"/>
<rect x="646" y="539" width="20" height="1" fill="#d8c49c"/>
<rect x="674" y="523" width="14" height="12" fill="#1f8a4c"/><rect x="674" y="525" width="8" height="8" fill="#106a36"/><text x="676" y="532" style="font-size:7px;font-weight:bold;fill:#fff">x</text>
<rect x="699" y="523" width="14" height="12" fill="#2b6cc4"/><rect x="699" y="525" width="8" height="8" fill="#184a98"/><text x="700.500" y="532" style="font-size:6.500px;font-weight:bold;fill:#fff">w</text>
<path d="M725 524h5l2 2h6v10h-13z" fill="#e8c860"/><rect x="725" y="530" width="13" height="6" fill="#f4dc8a"/><rect x="729" y="531" width="5" height="2" fill="#3f88c8"/>
<rect x="721" y="539" width="20" height="1" fill="#d8c49c"/>
<rect x="749.500" y="523" width="13" height="12" fill="#050505" stroke="#777" stroke-width=".7"/>
<rect x="746" y="539" width="20" height="1" fill="#d8c49c"/>
<rect x="769" y="518" width="24" height="22" fill="#3f4048"/>
<path d="M781 522l5 6-5 7-5-7z" fill="#7a70c8"/><path d="M773.500 528.700h15" stroke="#f4f4ff" stroke-width="2"/>
<rect x="769" y="539" width="24" height="1" fill="#d8c49c"/>
<path d="M798 530.500l3.500-3 3.500 3" fill="none" stroke="#ddd" stroke-width=".8"/>
<rect x="813" y="525" width="5" height="7" rx="2" fill="none" stroke="#ccc" stroke-width=".8"/><path d="M812 534h7M811.500 528.500h8" stroke="#ccc" stroke-width=".8"/>
<path d="M825 534c1-5 4-8 9-9M828 534c1-3 3-5 6-6" fill="none" stroke="#888" stroke-width=".9"/>
<path d="M838 527h2l3-2.500v9l-3-2.500h-2z" fill="none" stroke="#ccc" stroke-width=".8"/><path d="M845 526c1 2 1 4 0 6" fill="none" stroke="#ccc" stroke-width=".7"/>
<path d="M854 533l3-3M859 528l3-3M855 529l-2 3 2 2 3-2M857 527l2-2c2-1 4 1 3 3l-2 2" fill="none" stroke="#ccc" stroke-width=".8"/>
<text x="870.500" y="532" style="font-size:7px;fill:#ddd">ENG</text>
<text x="899" y="526" style="font-size:7.500px;fill:#e0e0e0">22:33</text>
<text x="891" y="537" style="font-size:7.500px;fill:#e0e0e0">07-11-2024</text>
<path d="M936.500 524.500h10v8h-5l-2 2v-2h-3z" fill="#e8e8e8"/><path d="M938 527h7M938 529.500h7" stroke="#888" stroke-width=".6"/><circle cx="946" cy="533" r="1.800" fill="#aaa"/>
</svg>
</body></html>
